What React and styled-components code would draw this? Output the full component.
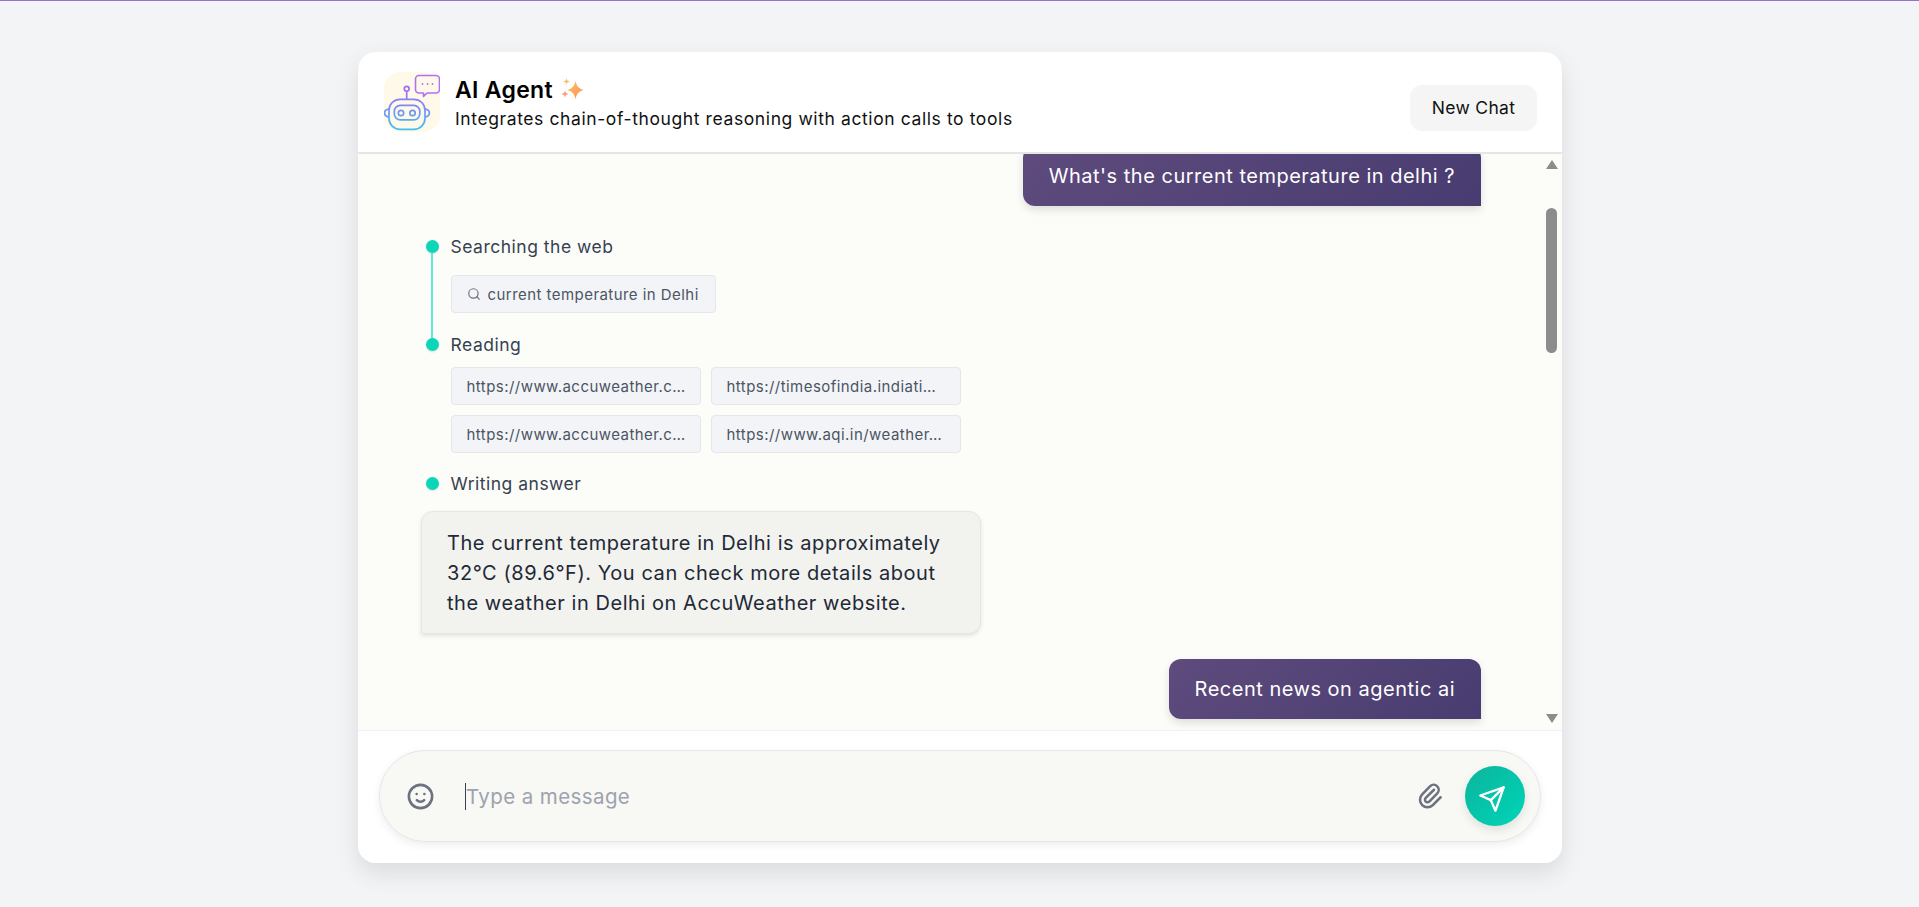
import React from 'react';
import styled, { createGlobalStyle } from 'styled-components';
import { FiSearch, FiSend } from 'react-icons/fi';
import { HiOutlineEmojiHappy, HiOutlinePaperClip } from 'react-icons/hi';

const GlobalStyle = createGlobalStyle`
  html, body {
    margin: 0;
    padding: 0;
    background: #f3f4f6;
  }

  * {
    box-sizing: border-box;
  }
`;

const Page = styled.div`
  height: 907px;
  overflow: hidden;
  border-top: 1px solid #9b6fd0;
  padding-top: 51px;
  font-family: Inter, "Liberation Sans", sans-serif;
`;

const Card = styled.div`
  width: 1204px;
  height: 811px;
  margin-left: 358px;
  display: flex;
  flex-direction: column;
  background: #fff;
  border-radius: 18px;
  overflow: hidden;
  box-shadow: 0 10px 25px rgba(0, 0, 0, 0.1);
`;

const Header = styled.header`
  height: 102px;
  flex-shrink: 0;
  display: flex;
  align-items: center;
  justify-content: space-between;
  padding: 0 25px 0 26px;
  border-bottom: 2px solid #e5e5e5;
`;

const Brand = styled.div`
  display: flex;
  align-items: center;
  gap: 15px;
`;

const Titles = styled.div`
  display: flex;
  flex-direction: column;
  gap: 3px;
  padding-top: 2px;
`;

const TitleRow = styled.div`
  display: flex;
  align-items: center;
  gap: 8px;
`;

const Title = styled.h1`
  margin: 0;
  font-size: 23px;
  line-height: 28px;
  font-weight: 600;
  color: #000;
  letter-spacing: 0.3px;
`;

const Subtitle = styled.p`
  margin: 0;
  font-size: 17.5px;
  line-height: 24px;
  color: #111;
  letter-spacing: 0.6px;
`;

const NewChat = styled.button`
  width: 127px;
  height: 46px;
  margin-top: 11px;
  border: none;
  border-radius: 12px;
  background: #f5f5f5;
  color: #111;
  font-family: inherit;
  font-size: 17.5px;
  letter-spacing: 0.3px;
`;

const Body = styled.div`
  flex: 1;
  min-height: 0;
  display: flex;
  background: #fcfdf9;
`;

const Messages = styled.div`
  flex: 1;
  min-width: 0;
  overflow: hidden;
  display: flex;
  flex-direction: column;
  padding: 0 64px 0 63px;
`;

const UserBubble = styled.div`
  align-self: flex-end;
  flex-shrink: 0;
  height: 60px;
  margin-top: ${props => props.$top}px;
  padding: 0 26px;
  display: flex;
  align-items: center;
  border-radius: 12px 12px 0 12px;
  background: linear-gradient(135deg, #5f4b7d, #483c70);
  color: #fff;
  font-size: 20px;
  letter-spacing: 0.5px;
  box-shadow: 0 4px 8px rgba(0, 0, 0, 0.12);
`;

const Timeline = styled.div`
  margin-top: 29px;
  display: flex;
  flex-direction: column;
  flex-shrink: 0;
`;

const Step = styled.div`
  display: flex;
  padding-bottom: ${props => props.$gap}px;
`;

const Marker = styled.div`
  width: 29.5px;
  flex-shrink: 0;
  padding-left: 4.5px;
  display: flex;
  flex-direction: column;
  align-items: flex-start;
`;

const Dot = styled.span`
  width: 13px;
  height: 13px;
  margin-top: 5px;
  flex-shrink: 0;
  border-radius: 50%;
  background: #0bd6b8;
  box-shadow: 0 1px 2px rgba(0, 0, 0, 0.12);
`;

const Line = styled.span`
  flex: 1;
  width: 2px;
  margin: 0 0 ${props => -props.$reach}px 5.5px;
  background: #5eead4;
`;

const StepBody = styled.div`
  display: flex;
  flex-direction: column;
  align-items: flex-start;
`;

const StepLabel = styled.div`
  font-size: 17.5px;
  line-height: 24px;
  color: #374151;
  letter-spacing: 0.5px;
`;

const ChipGrid = styled.div`
  margin-top: ${props => props.$top}px;
  display: grid;
  grid-template-columns: ${props => props.$columns};
  gap: 10px;
`;

const Chip = styled.div`
  height: 38px;
  display: flex;
  align-items: center;
  gap: 7px;
  padding: 0 16px 0 15px;
  background: #f3f4f8;
  border: 1px solid #e5e7eb;
  border-radius: 4px;
  color: #4b5563;
  font-size: 15px;
  letter-spacing: 0.45px;
  white-space: nowrap;
  svg {
    color: #6b7280;
    flex-shrink: 0;
  }
`;

const AnswerBubble = styled.div`
  flex-shrink: 0;
  width: 560px;
  margin-top: 15px;
  padding: 16px 25px 15px;
  background: #f2f2ee;
  border: 1px solid #e6e6e6;
  border-radius: 12px 12px 12px 0;
  color: #1f2937;
  font-size: 20px;
  line-height: 30px;
  letter-spacing: 0.55px;
  box-shadow: 0 2px 4px rgba(0, 0, 0, 0.1);
`;

const ScrollRail = styled.div`
  width: 17px;
  flex-shrink: 0;
  display: flex;
  flex-direction: column;
  align-items: center;
  padding: 6px 4px 0 0;
`;

const Arrow = styled.span`
  width: 0;
  height: 0;
  flex-shrink: 0;
  border-left: 6.5px solid transparent;
  border-right: 6.5px solid transparent;
  ${props => props.$down ? 'border-top: 9px solid #8c8c8c;' : 'border-bottom: 9px solid #8c8c8c;'}
`;

const Thumb = styled.span`
  width: 11px;
  height: 145px;
  margin: 39px 0 361px;
  flex-shrink: 0;
  border-radius: 6px;
  background: #8c8c8c;
`;

const Footer = styled.div`
  height: 133px;
  flex-shrink: 0;
  padding: 19px 21px 21px;
  border-top: 1px solid #f0f0f0;
  background: #fff;
`;

const InputPill = styled.div`
  height: 92px;
  display: flex;
  align-items: center;
  padding: 0 15px 0 25px;
  background: #f8f8f4;
  border: 1px solid #e5e7eb;
  border-radius: 46px;
  box-shadow: 0 3px 8px rgba(0, 0, 0, 0.07);
`;

const IconSlot = styled.span`
  display: flex;
  color: #6b7280;
  flex-shrink: 0;
`;

const Field = styled.div`
  flex: 1;
  display: flex;
  align-items: center;
  margin-left: 29px;
  color: #9ca3af;
  font-size: 20.5px;
  letter-spacing: 0.4px;
`;

const Caret = styled.span`
  width: 1px;
  height: 27px;
  background: #374151;
`;

const SendButton = styled.button`
  width: 60px;
  height: 60px;
  margin-left: 20px;
  padding: 0;
  border: none;
  border-radius: 50%;
  display: flex;
  align-items: center;
  justify-content: center;
  color: #fff;
  background: linear-gradient(135deg, #0bb59c, #00d4b8);
  box-shadow: 0 4px 10px rgba(0, 0, 0, 0.1);
  svg {
    margin: 6px 6px 0 0;
  }
`;

const RobotLogo = () => (
  <svg width="56" height="60" viewBox="0 0 56 60" fill="none">
    <defs>
      <linearGradient id="robotStroke" x1="0" y1="14" x2="0" y2="58" gradientUnits="userSpaceOnUse">
        <stop offset="0" stopColor="#a76bf5" />
        <stop offset="0.5" stopColor="#7b8cf8" />
        <stop offset="1" stopColor="#3fc3f0" />
      </linearGradient>
    </defs>
    <rect width="56" height="60" rx="17" fill="#fef9e8" />
    <path
      d="M35 3.500h17a3.500 3.500 0 0 1 3.500 3.500v10.500a3.500 3.500 0 0 1-3.500 3.500H43l-3.500 3.500V21H35a3.500 3.500 0 0 1-3.500-3.500V7A3.500 3.500 0 0 1 35 3.500z"
      stroke="#b56ef5"
      strokeWidth="1.6"
      strokeLinejoin="round"
      fill="#fef9e8"
    />
    <circle cx="38.500" cy="12" r="0.9" fill="#b56ef5" />
    <circle cx="43.500" cy="12" r="0.9" fill="#b56ef5" />
    <circle cx="48.500" cy="12" r="0.9" fill="#b56ef5" />
    <g stroke="url(#robotStroke)" strokeWidth="1.7">
      <circle cx="22.700" cy="16.700" r="2.400" />
      <path d="M22.700 19v8.300" />
      <rect x="5" y="27.300" width="36" height="30" rx="11" />
      <rect x="10.300" y="33.300" width="25.500" height="14.500" rx="6" />
      <circle cx="17" cy="41" r="2.700" />
      <circle cx="28.500" cy="41" r="2.700" />
      <path d="M5 37c-3 .4-4.400 2.200-4.400 4s1.400 3.600 4.400 4" />
      <path d="M41 37c3 .4 4.400 2.200 4.400 4s-1.400 3.600-4.400 4" />
    </g>
  </svg>
);

const Sparkles = () => (
  <svg width="24" height="24" viewBox="0 0 24 24">
    <defs>
      <linearGradient id="sparkleFill" x1="0" y1="0" x2="1" y2="1">
        <stop offset="0" stopColor="#ffc35c" />
        <stop offset="1" stopColor="#fb8f5a" />
      </linearGradient>
    </defs>
    <path d="M14.500 2.500c.9 5.400 3 8 8.500 9.500-5.500 1.500-7.600 4.100-8.500 9.500-.9-5.400-3-8-8.500-9.500 5.500-1.500 7.600-4.100 8.500-9.500z" fill="url(#sparkleFill)" />
    <path d="M5.500 0c.4 2.300 1.200 3.100 3.500 3.500-2.300.4-3.100 1.200-3.500 3.500-.4-2.300-1.200-3.100-3.500-3.500C4.300 3.100 5.100 2.300 5.500 0z" fill="#fcc06a" />
    <path d="M4 12c.4 2.800 1.200 3.600 4 4-2.800.4-3.600 1.200-4 4-.4-2.800-1.200-3.600-4-4 2.800-.4 3.600-1.200 4-4z" fill="#fb9b7c" />
  </svg>
);

const readingLinks = [
  { id: 1, label: 'https://www.accuweather.c…' },
  { id: 2, label: 'https://timesofindia.indiati…' },
  { id: 3, label: 'https://www.accuweather.c…' },
  { id: 4, label: 'https://www.aqi.in/weather…' },
];

const App = () => (
  <>
    <GlobalStyle />
    <Page>
      <Card>
        <Header>
          <Brand>
            <RobotLogo />
            <Titles>
              <TitleRow>
                <Title>AI Agent</Title>
                <Sparkles />
              </TitleRow>
              <Subtitle>Integrates chain-of-thought reasoning with action calls to tools</Subtitle>
            </Titles>
          </Brand>
          <NewChat>New Chat</NewChat>
        </Header>

        <Body>
          <Messages>
            <UserBubble $top={-8}>What's the current temperature in delhi ?</UserBubble>

            <Timeline>
              <Step $gap={20}>
                <Marker>
                  <Dot />
                  <Line $reach={26} />
                </Marker>
                <StepBody>
                  <StepLabel>Searching the web</StepLabel>
                  <ChipGrid $top={16} $columns="auto">
                    <Chip>
                      <FiSearch size={14} />
                      current temperature in Delhi
                    </Chip>
                  </ChipGrid>
                </StepBody>
              </Step>
              <Step $gap={19}>
                <Marker>
                  <Dot />
                </Marker>
                <StepBody>
                  <StepLabel>Reading</StepLabel>
                  <ChipGrid $top={10} $columns="250px 250px">
                    {readingLinks.map(link => (
                      <Chip key={link.id}>{link.label}</Chip>
                    ))}
                  </ChipGrid>
                </StepBody>
              </Step>
              <Step $gap={0}>
                <Marker>
                  <Dot />
                </Marker>
                <StepBody>
                  <StepLabel>Writing answer</StepLabel>
                </StepBody>
              </Step>
            </Timeline>

            <AnswerBubble>
              The current temperature in Delhi is approximately 32°C (89.6°F). You can check more details about the weather in Delhi on AccuWeather website.
            </AnswerBubble>

            <UserBubble $top={25}>Recent news on agentic ai</UserBubble>
          </Messages>

          <ScrollRail>
            <Arrow />
            <Thumb />
            <Arrow $down />
          </ScrollRail>
        </Body>

        <Footer>
          <InputPill>
            <IconSlot>
              <HiOutlineEmojiHappy size={31} />
            </IconSlot>
            <Field>
              <Caret />
              Type a message
            </Field>
            <IconSlot>
              <HiOutlinePaperClip size={30} />
            </IconSlot>
            <SendButton>
              <FiSend size={28} strokeWidth={2} />
            </SendButton>
          </InputPill>
        </Footer>
      </Card>
    </Page>
  </>
);

export default App;
